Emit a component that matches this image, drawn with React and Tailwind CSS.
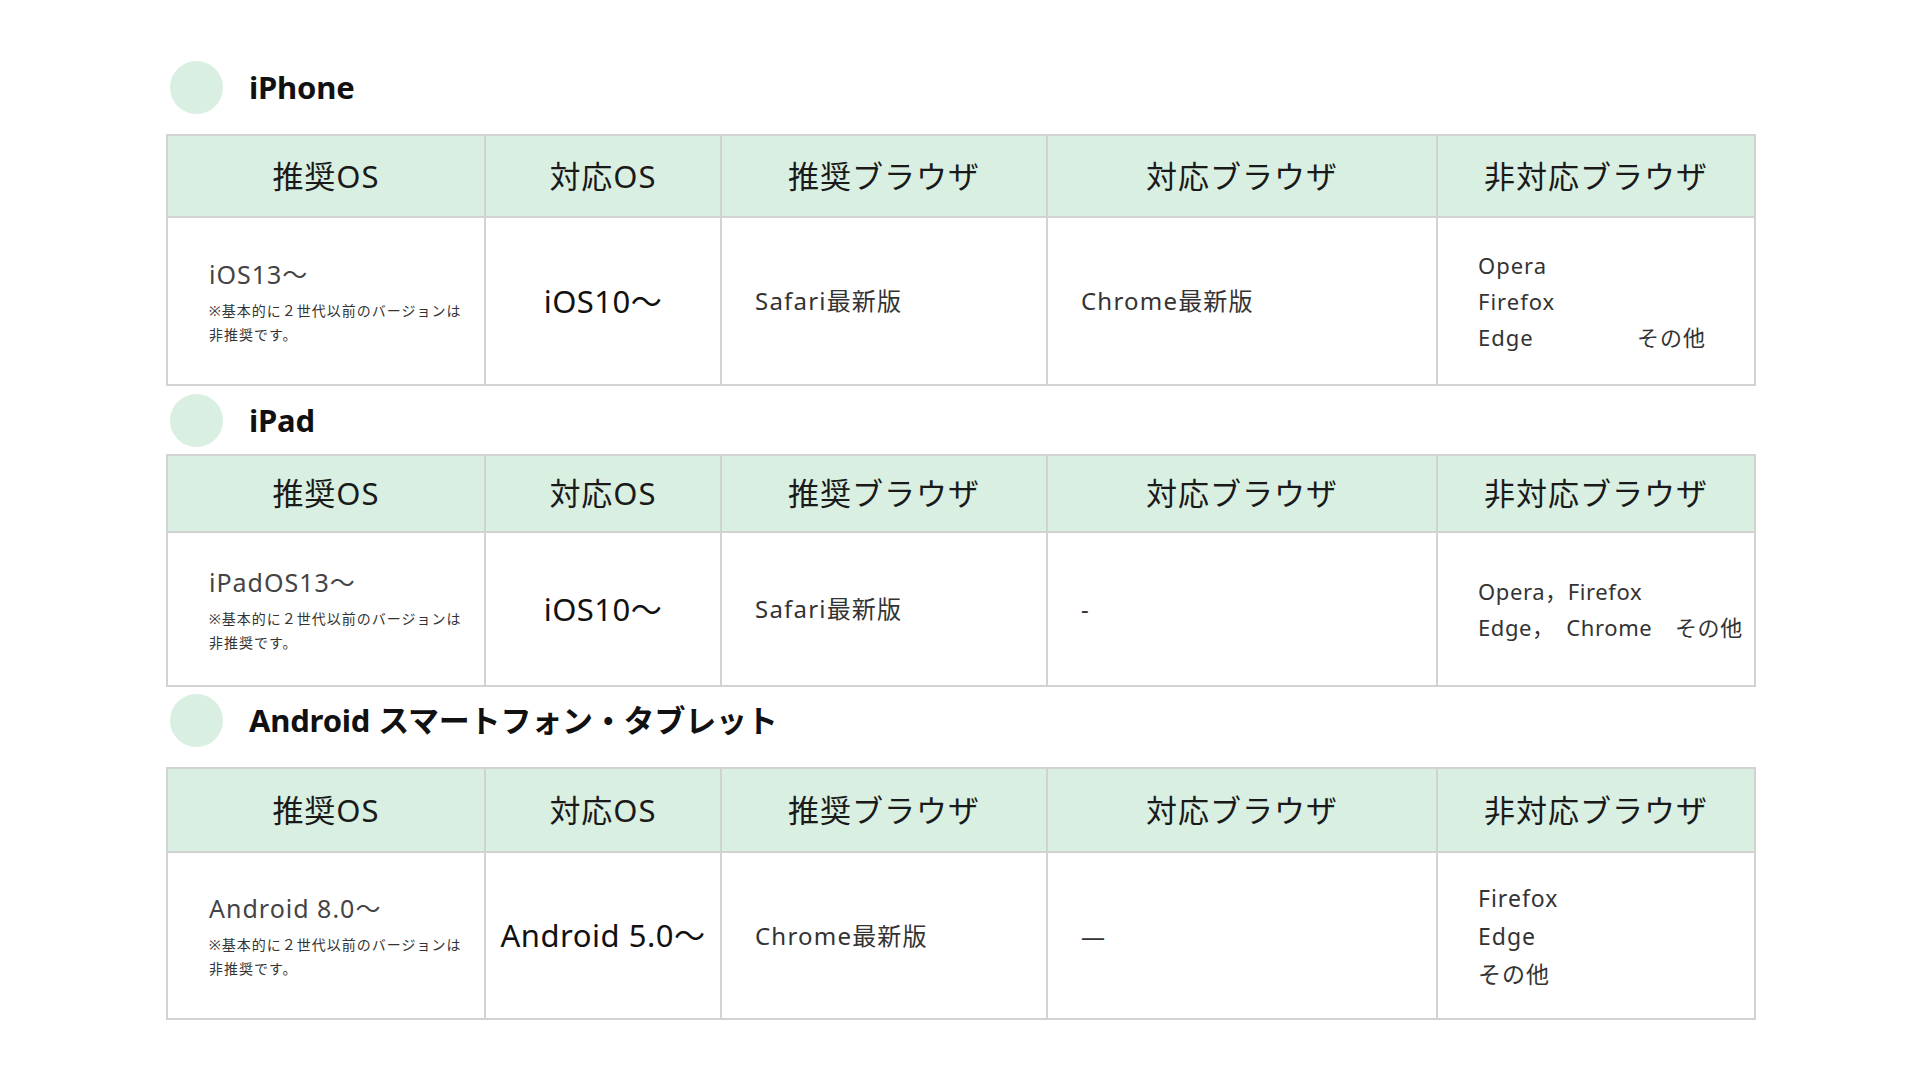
const FONT = "font-['Noto_Sans','Noto_Sans_CJK_JP',sans-serif]";

const HEADERS = ["推奨OS", "対応OS", "推奨ブラウザ", "対応ブラウザ", "非対応ブラウザ"];
const COLS = ["w-[318px]", "w-[236px]", "w-[326px]", "w-[390px]", "w-[318px]"];

function Title({ children, className }) {
  return (
    <div className={`flex items-center ${className}`}>
      <span className="w-[53px] h-[53px] rounded-full bg-[#d9efe2] shrink-0" />
      <h2 className="ml-[26px] text-[31px] font-bold text-[#111] tracking-[-0.2px] leading-none">
        {children}
      </h2>
    </div>
  );
}

function Note() {
  return (
    <p className="mt-[9px] text-[14px] leading-[24px] text-[#333] tracking-[1px]">
      ※基本的に２世代以前のバージョンは
      <br />
      非推奨です。
    </p>
  );
}

function DeviceTable({ headH, bodyH, cells }) {
  return (
    <table className="w-full table-fixed border-collapse">
      <thead>
        <tr className={headH}>
          {HEADERS.map((h, i) => (
            <th
              key={h}
              className={`${COLS[i]} border-2 border-[#d2d2d2] bg-[#d9efe2] text-[31px] font-normal text-[#1a1a1a] tracking-[1px]`}
            >
              {h}
            </th>
          ))}
        </tr>
      </thead>
      <tbody>
        <tr className={bodyH}>
          {cells.map((c, i) => (
            <td key={i} className="border-2 border-[#d2d2d2] align-middle">
              {c}
            </td>
          ))}
        </tr>
      </tbody>
    </table>
  );
}

function Rec({ label }) {
  return (
    <div className="pl-[41px] pt-[2px]">
      <p className="text-[25px] leading-[32px] text-[#444] tracking-[1px]">{label}</p>
      <Note />
    </div>
  );
}

function Big({ label }) {
  return <p className="text-center text-[31px] text-[#111] tracking-[0.5px]">{label}</p>;
}

function Plain({ label }) {
  return <p className="pl-[33px] text-[24px] text-[#333] tracking-[1.2px]">{label}</p>;
}

export default function App() {
  return (
    <div className={`${FONT} bg-white min-h-[1080px] w-full`}>
      <div className="w-[1588px] mx-auto pt-[61px]">
        {/* iPhone */}
        <Title className="ml-[4px]">iPhone</Title>
        <div className="mt-[20px]">
          <DeviceTable
            headH="h-[82px]"
            bodyH="h-[168px]"
            cells={[
              <Rec label="iOS13～" />,
              <Big label="iOS10～" />,
              <Plain label="Safari最新版" />,
              <Plain label="Chrome最新版" />,
              <div className="pl-[40px] pr-[48px] text-[22px] leading-[36px] text-[#333] tracking-[1px]">
                <p>Opera</p>
                <p>Firefox</p>
                <p className="flex justify-between">
                  <span>Edge</span>
                  <span>その他</span>
                </p>
              </div>,
            ]}
          />
        </div>

        {/* iPad */}
        <Title className="ml-[4px] mt-[8px]">iPad</Title>
        <div className="mt-[7px]">
          <DeviceTable
            headH="h-[77px]"
            bodyH="h-[154px]"
            cells={[
              <Rec label="iPadOS13～" />,
              <Big label="iOS10～" />,
              <Plain label="Safari最新版" />,
              <Plain label="-" />,
              <div className="pl-[40px] text-[22px] leading-[36px] text-[#333] tracking-[0.6px]">
                <p>Opera，Firefox</p>
                <p>Edge，　Chrome　その他</p>
              </div>,
            ]}
          />
        </div>

        {/* Android */}
        <Title className="ml-[4px] mt-[7px]">Android スマートフォン・タブレット</Title>
        <div className="mt-[20px]">
          <DeviceTable
            headH="h-[84px]"
            bodyH="h-[167px]"
            cells={[
              <Rec label="Android 8.0～" />,
              <Big label="Android 5.0～" />,
              <Plain label="Chrome最新版" />,
              <Plain label="—" />,
              <div className="pl-[40px] text-[23px] leading-[38px] text-[#333] tracking-[1px]">
                <p>Firefox</p>
                <p>Edge</p>
                <p>その他</p>
              </div>,
            ]}
          />
        </div>
      </div>
    </div>
  );
}
